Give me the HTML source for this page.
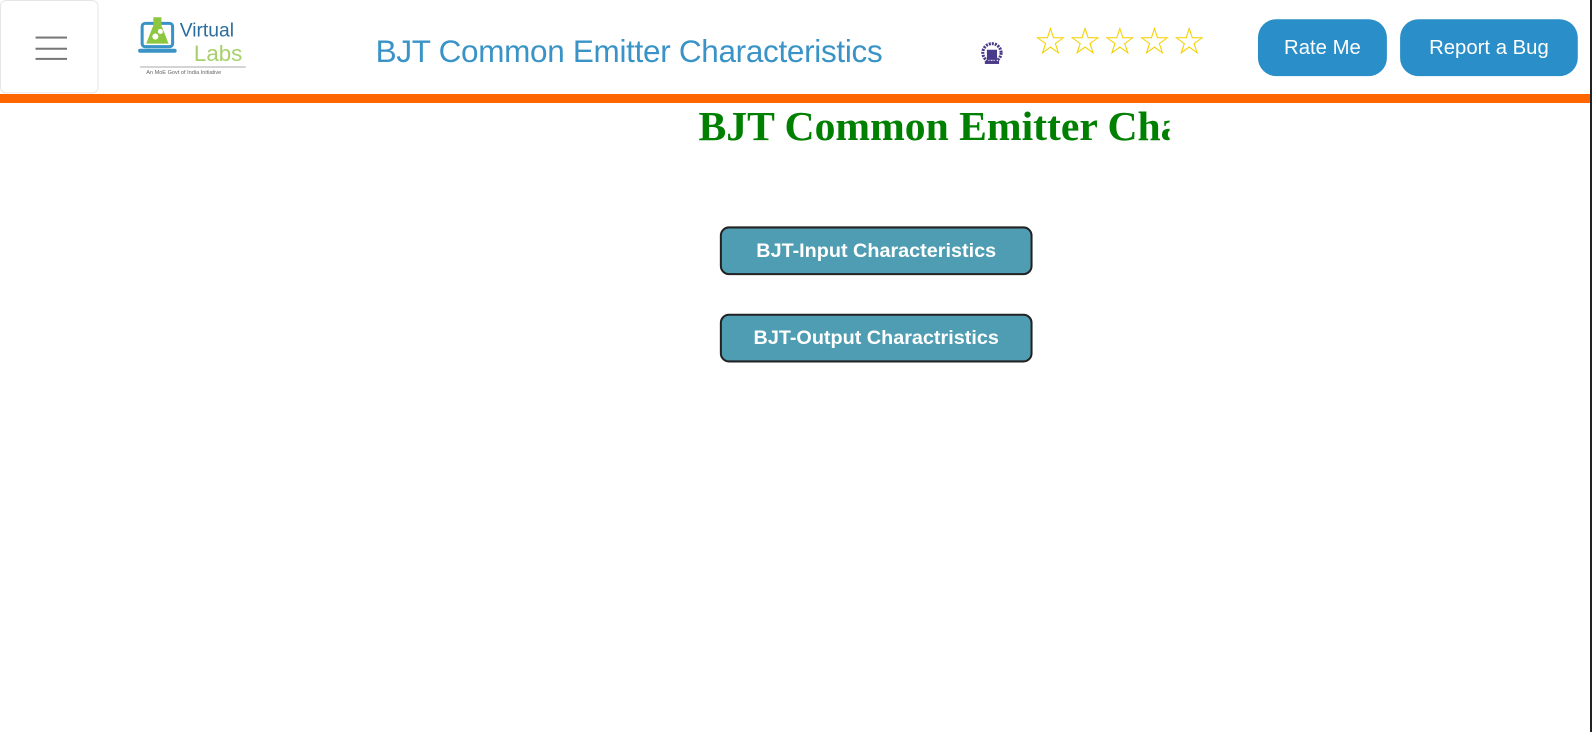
<!DOCTYPE html>
<html><head><style>
html,body{margin:0;padding:0}
body{width:1592px;height:732px;background:#fff;position:relative;overflow:hidden;font-family:"Liberation Sans",sans-serif}
#w{position:absolute;left:0;top:0;width:1568px;height:721px;transform:scale(1.0153);transform-origin:0 0}
.abs{position:absolute}
.menu{left:0;top:0;width:97px;height:92px;border:1px solid #e6e6e6;border-radius:6px;box-sizing:border-box}
.menu i{position:absolute;left:34px;width:31px;height:2px;background:#777}
.title{left:370px;top:33px;font-size:31px;color:#3a93c6;letter-spacing:-0.3px;white-space:nowrap}
.btn{background:#2a8fc8;color:#fff;border-radius:18px;font-size:20px;text-align:center;line-height:56px;height:56px;top:19px}
.h1{left:688px;top:100px;width:464px;overflow:hidden;white-space:nowrap;font-family:"Liberation Serif",serif;font-weight:bold;font-size:41px;color:#008000}
.b2{left:709px;width:308px;height:48px;border:2px solid #222;border-radius:9px;box-sizing:border-box;background:#4f9db2;color:#fff;font-weight:bold;font-size:19.5px;text-align:center;line-height:44px;white-space:nowrap}
</style></head><body>
<div id="w">
<div class="abs menu"><i style="top:35px"></i><i style="top:46px"></i><i style="top:56px"></i></div>
<svg class="abs" style="left:136px;top:14px" width="110" height="62" viewBox="0 0 110 62">
<rect x="4" y="9" width="30" height="23" rx="3" fill="none" stroke="#3a93c6" stroke-width="3"/>
<rect x="0" y="34" width="38" height="4" rx="2" fill="#3a93c6"/>
<path d="M15 3h8v8l7 18h-22l7-18z" fill="#8dc63f"/>
<circle cx="17" cy="22" r="3" fill="#fff"/><circle cx="22" cy="17" r="2.5" fill="#fff"/>
<text x="41" y="22" font-family="Liberation Sans" font-size="19" fill="#2b6d9e">Virtual</text>
<text x="55" y="46" font-family="Liberation Sans" font-size="22" fill="#a6d06b" font-weight="300">Labs</text>
<line x1="2" y1="52" x2="106" y2="52" stroke="#aaa" stroke-width="1"/>
<text x="8" y="59" font-family="Liberation Sans" font-size="5.5" fill="#666">An MoE Govt of India Initiative</text>
</svg>
<div class="abs title">BJT Common Emitter Characteristics</div>
<svg class="abs" style="left:966px;top:41px" width="22" height="24" viewBox="0 0 22 24"><circle cx="11" cy="11" r="9" fill="none" stroke="#4a3a8a" stroke-width="3" stroke-dasharray="2 1"/><rect x="6" y="8" width="10" height="10" fill="#4a3a8a"/><rect x="4" y="19" width="14" height="3" fill="#4a3a8a"/></svg>
<div class="abs" style="left:1018px;top:19px;font-size:37px;color:#f5d000;letter-spacing:1px">☆☆☆☆☆</div>
<div class="abs btn" style="left:1239px;width:127px">Rate Me</div>
<div class="abs btn" style="left:1379px;width:175px">Report a Bug</div>
<div class="abs h1">BJT Common Emitter Characteristics</div>
<div class="abs b2" style="top:223px">BJT-Input Characteristics</div>
<div class="abs b2" style="top:309px">BJT-Output Charactristics</div>
</div>
<div class="abs" style="left:0;top:94px;width:1590px;height:9px;background:#ff6600"></div>
<div class="abs" style="left:1590px;top:0;width:2px;height:732px;background:#222"></div>
</body></html>
